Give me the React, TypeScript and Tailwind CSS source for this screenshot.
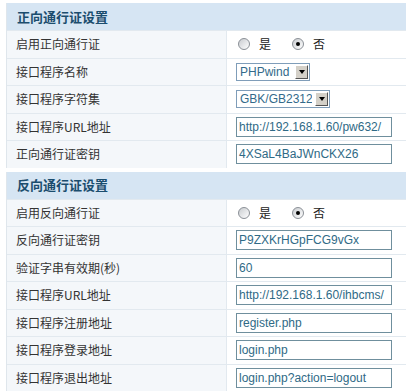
import React from 'react';

type Row =
  | { label: string; kind: 'radio'; on: boolean }
  | { label: string; kind: 'select'; value: string; width: string }
  | { label: string; kind: 'input'; value: string };

const forward: Row[] = [
  { label: '启用正向通行证', kind: 'radio', on: false },
  { label: '接口程序名称', kind: 'select', value: 'PHPwind', width: 'w-[74px]' },
  { label: '接口程序字符集', kind: 'select', value: 'GBK/GB2312', width: 'w-[94px]' },
  { label: '接口程序URL地址', kind: 'input', value: 'http://192.168.1.60/pw632/' },
  { label: '正向通行证密钥', kind: 'input', value: '4XSaL4BaJWnCKX26' },
];

const reverse: Row[] = [
  { label: '启用反向通行证', kind: 'radio', on: false },
  { label: '反向通行证密钥', kind: 'input', value: 'P9ZXKrHGpFCG9vGx' },
  { label: '验证字串有效期(秒)', kind: 'input', value: '60' },
  { label: '接口程序URL地址', kind: 'input', value: 'http://192.168.1.60/ihbcms/' },
  { label: '接口程序注册地址', kind: 'input', value: 'register.php' },
  { label: '接口程序登录地址', kind: 'input', value: 'login.php' },
  { label: '接口程序退出地址', kind: 'input', value: 'login.php?action=logout' },
];

const Radio = ({ checked }: { checked: boolean }) => (
  <span className="flex h-[12px] w-[12px] items-center justify-center rounded-full border border-[#8a8f96] bg-gradient-to-br from-[#c9ccd0] to-white">
    {checked && <span className="h-[4px] w-[4px] rounded-full bg-black" />}
  </span>
);

const Field = ({ row }: { row: Row }) => {
  if (row.kind === 'radio') {
    return (
      <div className="flex items-center pl-[11px] text-[12px] text-[#222]">
        <Radio checked={row.on} />
        <span className="ml-[9px]">是</span>
        <span className="ml-[21px]"><Radio checked={!row.on} /></span>
        <span className="ml-[9px]">否</span>
      </div>
    );
  }
  if (row.kind === 'select') {
    return (
      <div className={`ml-[9px] flex h-[18px] items-center border border-[#7f9db9] bg-white ${row.width}`}>
        <span className="flex-1 overflow-hidden pl-[3px] font-['Liberation_Sans',sans-serif] text-[12px] whitespace-nowrap text-[#336a8a]">{row.value}</span>
        <span className="mr-[1px] ml-[3px] flex h-[14px] w-[13px] shrink-0 items-center justify-center border border-t-white border-l-white border-r-[#555] border-b-[#555] bg-[#d4d0c8]">
          <span className="h-0 w-0 border-x-[3.5px] border-t-[4px] border-x-transparent border-t-black" />
        </span>
      </div>
    );
  }
  return (
    <div className="ml-[9px] flex h-[20px] w-[156px] items-center overflow-hidden border border-[#6f8f9d] bg-white pl-[2px] font-['Liberation_Sans',sans-serif] text-[12px] whitespace-nowrap text-[#2f6a86]">
      {row.value}
    </div>
  );
};

const Section = ({ title, rows }: { title: string; rows: Row[] }) => (
  <div className="border-l border-[#dfe6ec]">
    <div className="flex h-[27px] items-center bg-[#d6e5f3] pl-[10px] text-[13px] font-bold text-[#1b4d6e]">
      {title}
    </div>
    {rows.map((row) => (
      <div key={row.label} className="flex h-[27.5px] border-t border-[#e2e9ef]">
        <div className="flex w-[220px] items-center border-r border-[#e2e9ef] bg-[#f4f7fa] pl-[9px] text-[12px] text-[#333]">
          {row.label}
        </div>
        <div className="flex flex-1 items-center bg-white">
          <Field row={row} />
        </div>
      </div>
    ))}
  </div>
);

export default function App() {
  return (
    <div className="h-[391px] w-[406px] overflow-hidden bg-white pt-[3px] pl-[6px] font-['Noto_Sans_CJK_SC',sans-serif]">
      <Section title="正向通行证设置" rows={forward} />
      <div className="h-[4px]" />
      <Section title="反向通行证设置" rows={reverse} />
    </div>
  );
}
